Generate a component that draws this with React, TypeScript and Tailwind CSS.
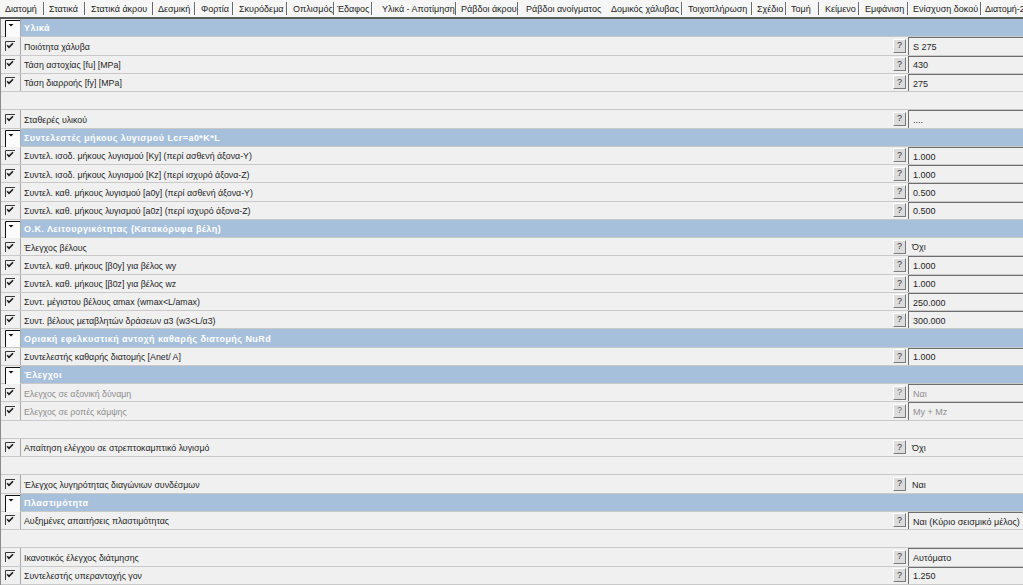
import React from "react";

type Row =
  | { kind: "header"; label: string }
  | { kind: "empty" }
  | { kind: "item"; label: string; value?: string; boxed?: boolean; disabled?: boolean };

const tabs: { label: string; w: number; sep: boolean; pad: number }[] = [
  { label: "Διατομή", w: 45, sep: true, pad: 5 },
  { label: "Στατικά", w: 41, sep: true, pad: 4 },
  { label: "Στατικά άκρου", w: 68, sep: true, pad: 5 },
  { label: "Δεσμική", w: 42, sep: true, pad: 4 },
  { label: "Φορτία", w: 38, sep: true, pad: 5 },
  { label: "Σκυρόδεμα", w: 54, sep: true, pad: 5 },
  { label: "Οπλισμός", w: 45, sep: true, pad: 5 },
  { label: "Έδαφος", w: 40, sep: true, pad: 4 },
  { label: "Υλικά - Αποτίμηση", w: 84, sep: true, pad: 9 },
  { label: "Ράβδοι άκρου", w: 62, sep: true, pad: 4 },
  { label: "Ράβδοι ανοίγματος", w: 87, sep: false, pad: 7 },
  { label: "Δομικός χάλυβας", w: 77, sep: true, pad: 5 },
  { label: "Τοιχοπλήρωση", w: 70, sep: true, pad: 5 },
  { label: "Σχέδιο", w: 34, sep: true, pad: 4 },
  { label: "Τομή", w: 33, sep: true, pad: 4 },
  { label: "Κείμενο", w: 40, sep: true, pad: 5 },
  { label: "Εμφάνιση", w: 49, sep: true, pad: 5 },
  { label: "Ενίσχυση δοκού", w: 73, sep: true, pad: 4 },
  { label: "Διατομή-2", w: 60, sep: false, pad: 3 },
];

const rows: Row[] = [
  { kind: "header", label: "Υλικά" },
  { kind: "item", label: "Ποιότητα χάλυβα", value: "S 275", boxed: true },
  { kind: "item", label: "Τάση αστοχίας [fu] [MPa]", value: "430", boxed: true },
  { kind: "item", label: "Τάση διαρροής [fy] [MPa]", value: "275", boxed: true },
  { kind: "empty" },
  { kind: "item", label: "Σταθερές υλικού", value: "....", boxed: true },
  { kind: "header", label: "Συντελεστές μήκους λυγισμού Lcr=a0*K*L" },
  { kind: "item", label: "Συντελ. ισοδ. μήκους λυγισμού [Ky] (περί ασθενή άξονα-Y)", value: "1.000", boxed: true },
  { kind: "item", label: "Συντελ. ισοδ. μήκους λυγισμού [Kz] (περί ισχυρό άξονα-Z)", value: "1.000", boxed: true },
  { kind: "item", label: "Συντελ. καθ. μήκους λυγισμού [a0y] (περί ασθενή άξονα-Y)", value: "0.500", boxed: true },
  { kind: "item", label: "Συντελ. καθ. μήκους λυγισμού [a0z] (περί ισχυρό άξονα-Z)", value: "0.500", boxed: true },
  { kind: "header", label: "Ο.Κ. Λειτουργικότητας (Κατακόρυφα βέλη)" },
  { kind: "item", label: "Έλεγχος βέλους", value: "Όχι" },
  { kind: "item", label: "Συντελ. καθ. μήκους [β0y] για βέλος wy", value: "1.000", boxed: true },
  { kind: "item", label: "Συντελ. καθ. μήκους [β0z] για βέλος wz", value: "1.000", boxed: true },
  { kind: "item", label: "Συντ. μέγιστου βέλους αmax (wmax<L/amax)", value: "250.000", boxed: true },
  { kind: "item", label: "Συντ. βέλους μεταβλητών δράσεων α3 (w3<L/α3)", value: "300.000", boxed: true },
  { kind: "header", label: "Οριακή εφελκυστική αντοχή καθαρής διατομής NuRd" },
  { kind: "item", label: "Συντελεστής καθαρής διατομής [Anet/ A]", value: "1.000", boxed: true },
  { kind: "header", label: "Έλεγχοι" },
  { kind: "item", label: "Ελεγχος σε αξονική δύναμη", value: "Ναι", boxed: true, disabled: true },
  { kind: "item", label: "Ελεγχος σε ροπές κάμψης", value: "My + Mz", boxed: true, disabled: true },
  { kind: "empty" },
  { kind: "item", label: "Απαίτηση ελέγχου σε στρεπτοκαμπτικό λυγισμό", value: "Όχι" },
  { kind: "empty" },
  { kind: "item", label: "Έλεγχος λυγηρότητας διαγώνιων συνδέσμων", value: "Ναι" },
  { kind: "header", label: "Πλαστιμότητα" },
  { kind: "item", label: "Αυξημένες απαιτήσεις πλαστιμότητας", value: "Ναι (Κύριο σεισμικό μέλος)", boxed: true },
  { kind: "empty" },
  { kind: "item", label: "Ικανοτικός έλεγχος διάτμησης", value: "Αυτόματο", boxed: true },
  { kind: "item", label: "Συντελεστής υπεραντοχής γον", value: "1.250", boxed: true },
];

function CheckMark() {
  return (
    <svg width="10" height="10" viewBox="0 0 10 10" className="ml-[4px]">
      <path d="M0.5 10V0.5H10" fill="none" stroke="#3a3a3a" strokeWidth="1" />
      <path d="M2.2 4.2L4 6.4L8 2.2" fill="none" stroke="#1a1a1a" strokeWidth="1.6" />
    </svg>
  );
}

function ComboMark() {
  return (
    <svg width="15" height="17" viewBox="0 0 15 17" className="ml-[4px] mt-[1px] self-start">
      <rect x="0" y="0" width="15" height="17" fill="#fbfbfb" />
      <path d="M0.5 17V0.5H15" fill="none" stroke="#101010" strokeWidth="1" />
      <path d="M3.5 4H8.5L6 6.5Z" fill="#101010" />
    </svg>
  );
}

function HelpButton({ disabled }: { disabled?: boolean }) {
  return (
    <div className="flex h-[14px] w-[13px] shrink-0 items-center justify-center border-t border-l border-t-white border-l-white border-r border-b border-r-[#7a7a7a] border-b-[#7a7a7a] bg-[#dcdcdc] text-[9px] leading-none text-[#303030]">
      <span className={disabled ? "text-[#707070]" : ""}>?</span>
    </div>
  );
}

function GridRow({ row }: { row: Row }) {
  if (row.kind === "empty") {
    return <div className="h-[18.26px] border-b border-[#c9c9c9] bg-[#f0f0f0]" />;
  }
  if (row.kind === "header") {
    return (
      <div className="flex h-[18.26px] border-b border-[#c9c9c9]">
        <div className="flex w-[20px] shrink-0 border-r border-[#a8a8a8] bg-[#f0f0f0]">
          <ComboMark />
        </div>
        <div className="flex flex-1 items-center bg-[#a6bfdb] pl-[3px] pt-[3px] text-[9px] font-bold tracking-[0.45px] text-white">
          {row.label}
        </div>
      </div>
    );
  }
  return (
    <div className="flex h-[18.26px] items-stretch border-b border-[#c9c9c9] bg-[#f0f0f0]">
      <div className="flex w-[20px] shrink-0 items-center border-r border-[#a8a8a8]">
        <CheckMark />
      </div>
      <div className={"flex min-w-0 flex-1 items-center pl-[3px] pt-[3px] text-[8.8px] " + (row.disabled ? "text-[#8e8e8e]" : "text-[#1e1e1e]")}>
        {row.label}
      </div>
      <div className="flex w-[130px] shrink-0 items-center overflow-hidden">
        {row.value !== undefined && (
          <>
            <HelpButton disabled={row.disabled} />
            <div
              className={
                "ml-[2px] flex h-full min-w-0 flex-1 items-center pl-[4px] pt-[3px] " +
                (row.boxed ? "border-t border-l border-[#6e6e6e] " : "") +
                (row.disabled ? "text-[#8e8e8e]" : "text-[#1e1e1e]")
              }
            >
              {row.value}
            </div>
          </>
        )}
      </div>
    </div>
  );
}

export default function App() {
  return (
    <div className="h-[585px] w-[1023px] overflow-hidden bg-[#f0f0f0] font-['Liberation_Sans',Arial,sans-serif] text-[9px]">
      <div className="flex h-[19px] items-center overflow-hidden whitespace-nowrap border-b-2 border-[#5c5c5c] bg-[#f6f6f6] text-[9px] text-[#1c1c1c]">
        {tabs.map((t) => (
          <div key={t.label} className="flex h-full shrink-0 items-center justify-between" style={{ width: t.w, paddingLeft: t.pad }}>
            <span className="pt-[2px]">{t.label}</span>
            {t.sep && <span className="h-[13px] w-[2px] border-l border-r border-l-[#6a6a6a] border-r-white" />}
          </div>
        ))}
      </div>
      <div className="border-l border-[#8a8a8a] whitespace-nowrap">
        {rows.map((r, i) => (
          <GridRow key={i} row={r} />
        ))}
      </div>
    </div>
  );
}
